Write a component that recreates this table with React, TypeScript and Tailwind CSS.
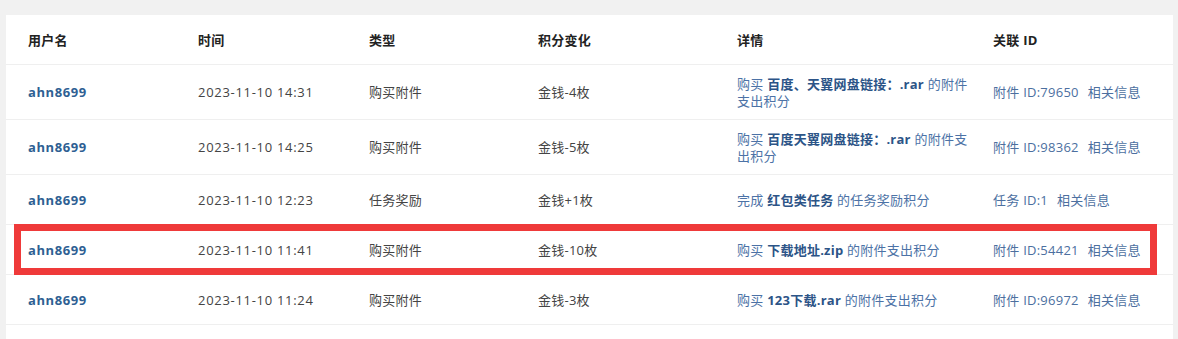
import React from "react";

type Row = {
  user: string;
  time: string;
  type: string;
  change: string;
  detail: React.ReactNode;
  idLabel: string;
  tall?: boolean;
  highlight?: boolean;
};

const B = ({ children }: { children: React.ReactNode }) => (
  <span className="font-bold text-[#2c5487]">{children}</span>
);

const rows: Row[] = [
  {
    user: "ahn8699",
    time: "2023-11-10 14:31",
    type: "购买附件",
    change: "金钱-4枚",
    detail: (
      <>
        <div className="whitespace-nowrap">
          购买 <B>百度、天翼网盘链接：.rar</B> 的附件
        </div>
        <div className="whitespace-nowrap">支出积分</div>
      </>
    ),
    idLabel: "附件 ID:79650",
    tall: true,
  },
  {
    user: "ahn8699",
    time: "2023-11-10 14:25",
    type: "购买附件",
    change: "金钱-5枚",
    detail: (
      <>
        <div className="whitespace-nowrap">
          购买 <B>百度天翼网盘链接：.rar</B> 的附件支
        </div>
        <div className="whitespace-nowrap">出积分</div>
      </>
    ),
    idLabel: "附件 ID:98362",
    tall: true,
  },
  {
    user: "ahn8699",
    time: "2023-11-10 12:23",
    type: "任务奖励",
    change: "金钱+1枚",
    detail: (
      <div className="whitespace-nowrap">
        完成 <B>红包类任务</B> 的任务奖励积分
      </div>
    ),
    idLabel: "任务 ID:1",
  },
  {
    user: "ahn8699",
    time: "2023-11-10 11:41",
    type: "购买附件",
    change: "金钱-10枚",
    detail: (
      <div className="whitespace-nowrap">
        购买 <B>下载地址.zip</B> 的附件支出积分
      </div>
    ),
    idLabel: "附件 ID:54421",
    highlight: true,
  },
  {
    user: "ahn8699",
    time: "2023-11-10 11:24",
    type: "购买附件",
    change: "金钱-3枚",
    detail: (
      <div className="whitespace-nowrap">
        购买 <B>123下载.rar</B> 的附件支出积分
      </div>
    ),
    idLabel: "附件 ID:96972",
  },
];

const grid =
  "grid grid-cols-[170px_171px_169px_199px_256px_1fr] items-center pl-[22px] pt-[2px] border-b border-[#efefef]";

export default function App() {
  return (
    <div
      className="min-h-[339px] w-[1178px] bg-[#f1f1f1] pt-[15px] pl-[6px] text-[13px] tracking-[0.25px]"
      style={{ fontFamily: '"Open Sans", "Noto Sans CJK SC", sans-serif' }}
    >
      <div className="w-[1167px] min-h-[324px] bg-white">
        <div className={`${grid} h-[50px] font-bold text-[#222]`}>
          <div>用户名</div>
          <div>时间</div>
          <div>类型</div>
          <div>积分变化</div>
          <div>详情</div>
          <div>关联 ID</div>
        </div>
        {rows.map((r, i) => (
          <div
            key={i}
            className={`${grid} relative ${r.tall ? "h-[55px]" : "h-[50px]"} text-[#444]`}
          >
            <div className="font-bold tracking-[0.6px] text-[#2e5f93]">{r.user}</div>
            <div className="tracking-[0.7px]">{r.time}</div>
            <div>{r.type}</div>
            <div>{r.change}</div>
            <div className="leading-[17px] text-[#4c72a6]">{r.detail}</div>
            <div className="flex gap-[9px] whitespace-nowrap text-[#4c6f9f]">
              <span>{r.idLabel}</span>
              <span>相关信息</span>
            </div>
            {r.highlight && (
              <div className="pointer-events-none absolute top-[-1px] bottom-[-1px] left-[8px] right-[16px] border-[7px] border-[#ef3a3a]" />
            )}
          </div>
        ))}
      </div>
    </div>
  );
}
